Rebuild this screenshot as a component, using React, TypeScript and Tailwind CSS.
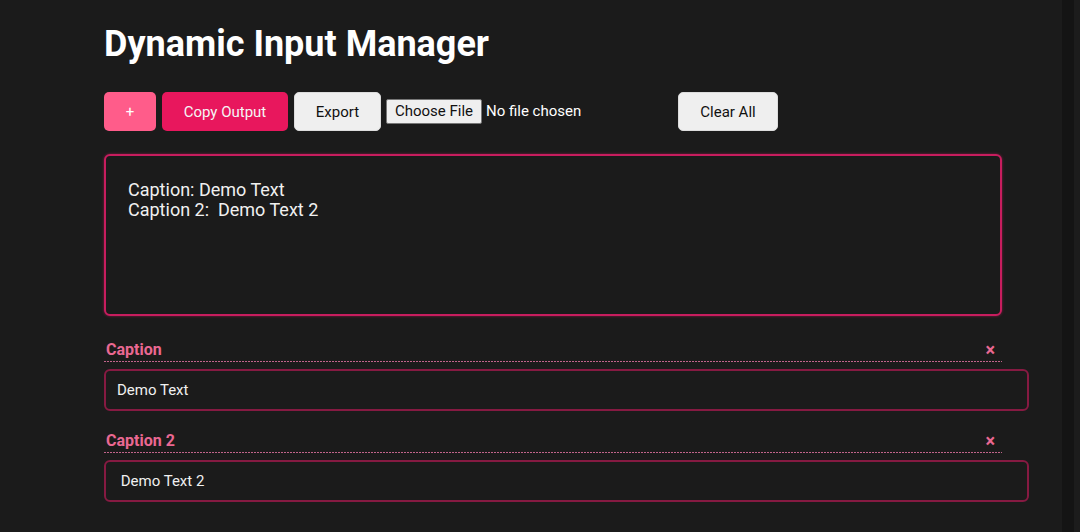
import { useState } from 'react';

type Field = { id: number; label: string; value: string };

const App: React.FC = () => {
  const [fields, setFields] = useState<Field[]>([
    { id: 1, label: 'Caption', value: 'Demo Text' },
    { id: 2, label: 'Caption 2', value: ' Demo Text 2' },
  ]);

  const output = fields.map((f) => `${f.label}: ${f.value}`).join('\n');

  const update = (id: number, value: string) =>
    setFields((prev) => prev.map((f) => (f.id === id ? { ...f, value } : f)));

  return (
    <div className="flex min-h-screen bg-[#1b1b1b] font-['Roboto',sans-serif] text-[#f0f0f0]">
      <main className="flex-1 pl-[104px] pt-[23px]">
        {/* Title */}
        <h1 className="text-[36px] font-bold leading-[42px] text-white">
          Dynamic Input Manager
        </h1>

        {/* Toolbar */}
        <div className="mt-[27px] flex items-center gap-[6px]">
          <button className="h-[39px] w-[52px] rounded-[5px] bg-[#ff5c8a] pt-[1px] text-[15px] text-white">
            +
          </button>
          <button className="h-[39px] w-[126px] rounded-[5px] bg-[#e8175d] pt-[1px] text-[15px] text-[#f5f5f5]">
            Copy Output
          </button>
          <button className="h-[39px] w-[87px] rounded-[5px] border border-[#dcdcdc] bg-[#efefef] pt-[1px] text-[15px] text-[#111]">
            Export
          </button>
          <div className="flex w-[285px] items-center">
            <span className="ml-[-1px] flex h-[25px] w-[96px] items-center justify-center rounded-[2px] border border-[#767676] bg-[#efefef] text-[15px] text-[#111]">
              Choose File
            </span>
            <span className="ml-[4px] text-[15px] text-white">No file chosen</span>
          </div>
          <button className="h-[39px] w-[100px] rounded-[5px] border border-[#dcdcdc] bg-[#efefef] pt-[1px] text-[15px] text-[#111]">
            Clear All
          </button>
        </div>

        {/* Output */}
        <textarea
          readOnly
          value={output}
          className="mt-[23px] block h-[162px] w-[898px] resize-none rounded-[6px] border-2 border-[#c81d5e] bg-[#1b1b1b] px-[22px] pt-[24px] text-[18px] leading-[20px] text-[#f0f0f0] shadow-[0_0_3px_rgba(200,29,94,0.6)] outline-none"
        />

        {/* Fields */}
        <div className="mt-[25px] flex flex-col gap-[21px]">
          {fields.map((f) => (
            <div key={f.id}>
              <div className="flex h-[20px] w-[898px] items-end justify-between pb-[2px] pl-[2px] pr-[7px]">
                <span className="text-[16px] font-bold leading-[18px] text-[#ea6892]">
                  {f.label}
                </span>
                <button
                  onClick={() => setFields((prev) => prev.filter((x) => x.id !== f.id))}
                  className="text-[18px] font-bold leading-[18px] text-[#ea6892]"
                >
                  ×
                </button>
              </div>
              {/* dotted rule */}
              <div className="h-px w-[898px] bg-[repeating-linear-gradient(90deg,#c0648a_0_2px,transparent_2px_3px)]" />
              <input
                value={f.value}
                onChange={(e) => update(f.id, e.target.value)}
                className="mt-[7px] block h-[42px] w-[925px] rounded-[6px] border-2 border-[#861a42] bg-transparent px-[11px] text-[15px] text-[#f0f0f0] outline-none"
              />
            </div>
          ))}
        </div>
      </main>
      <div className="w-[12px] bg-[#141414]" />
      <div className="w-[6px] bg-[#1c1c1c]" />
    </div>
  );
};

export default App;
